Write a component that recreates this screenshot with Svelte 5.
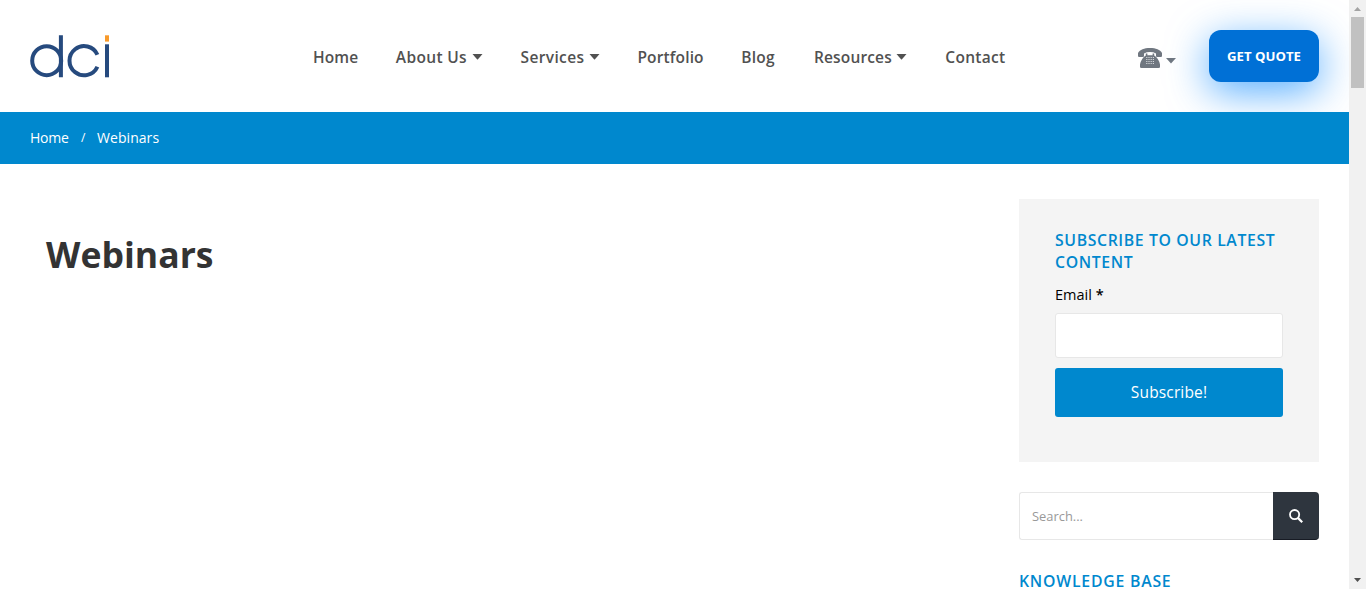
<script>
  const links = [
    { label: 'Home', width: 45, gap: 0.12 },
    { label: 'About Us', width: 87, menu: true, gap: 0.35 },
    { label: 'Services', width: 79, menu: true, gap: 0.35 },
    { label: 'Portfolio', width: 66, gap: 0.15 },
    { label: 'Blog', width: 35, gap: 0.3 },
    { label: 'Resources', width: 93.5, menu: true, gap: 0.15 },
    { label: 'Contact', width: 60, gap: 0.3 }
  ];
</script>

<div class="page">
  <div class="content">
    <header>
      <a class="logo" href="#home" aria-label="dci">
        <svg width="80" height="44" viewBox="0 0 80 44" fill="none" stroke="#264a7e" stroke-width="4">
          <circle cx="16.7" cy="25.700" r="14.500" />
          <path d="M30.900 0.300V42.3M67.400 19.700A14.6 14.6 0 1 0 67.400 31.7" />
          <path d="M77 9.300V42.3" />
          <path d="M77 0.300V6.600" stroke="#f89a2b" />
        </svg>
      </a>
      <nav>
        {#each links as link}
          <a href="#nav" style:width="{link.width}px" style:letter-spacing="{link.gap}px">
            {link.label}
            {#if link.menu}
              <svg class="caret" width="11" height="6" viewBox="0 0 11 6"><path d="M.5 0h10L6 5.200q-.5.5-1 0z" fill="currentColor" /></svg>
            {/if}
          </a>
        {/each}
      </nav>
      <div class="phone">
        <svg width="24" height="21" viewBox="0 0 24 21">
          <path fill="#707780" d="M0 8V5C2 1.500 6 0 12 0s10 1.500 12 5v3q-.1 1-1 1h-4q-1 0-1-1V5.400Q15.500 4 12 4T6 5.400V8q0 1-1 1H1Q.1 9 0 8z" />
          <path fill="#707780" d="M7.800 5.500h1.600v1.700h5.200V5.500h1.600v2q4.400 2.700 5.800 8.900V19q0 1-1.500 1h-17Q2 20 2 19v-2.600q1.400-6.200 5.800-8.900z" />
          <path stroke="#d4d7da" stroke-width="1.200" stroke-dasharray="1.200 1" d="M8.200 9.500h7.800M8.200 11.500h7.800M8.200 13.500h7.800M8.200 15.500h7.800" />
        </svg>
        <svg class="phone-caret" width="10" height="6" viewBox="0 0 10 6"><path d="M0 0h10L5 5.500z" fill="#707780" /></svg>
      </div>
      <a class="quote" href="#quote">GET QUOTE</a>
    </header>

    <div class="crumbs">
      <a href="#home">Home</a><span class="slash">/</span><span class="current">Webinars</span>
    </div>

    <main>
      <h1>Webinars</h1>
      <aside>
        <form class="subscribe">
          <h2>SUBSCRIBE TO OUR LATEST<br />CONTENT</h2>
          <label for="email">Email <b>*</b></label>
          <input id="email" type="email" />
          <button type="button">Subscribe!</button>
        </form>
        <form class="search">
          <input type="text" placeholder="Search..." />
          <button type="button" aria-label="Search">
            <svg width="14" height="14" viewBox="0 0 14 14" fill="none" stroke="#fff"><circle cx="5.600" cy="5.600" r="4.600" stroke-width="1.800" /><path d="M8.900 8.900l4.300 4.300" stroke-width="2.200" /></svg>
          </button>
        </form>
        <h2 class="kb">KNOWLEDGE BASE</h2>
      </aside>
    </main>
  </div>
  <div class="scrollbar">
    <svg width="17" height="17" viewBox="0 0 17 17"><path d="M5 11h7L8.500 7z" fill="#a3a3a3" /></svg>
    <div class="thumb"></div>
    <svg class="down" width="17" height="17" viewBox="0 0 17 17"><path d="M5 6h7l-3.500 4z" fill="#505050" /></svg>
  </div>
</div>

<style>
  :global(body) { margin: 0; overflow: hidden; background: #fff; }
  .page { display: flex; width: 1366px; height: 589px; overflow: hidden; font-family: "Open Sans", sans-serif; }
  .page * { box-sizing: border-box; }
  a { color: inherit; text-decoration: none; }
  .content { width: 1349px; height: 589px; overflow: hidden; }
  header { display: flex; height: 112px; padding: 0 30px; overflow: hidden; }
  .logo { width: 283px; padding-top: 35px; }
  .logo svg, .phone svg { display: block; }
  nav { display: flex; gap: 37.800px; width: 824.500px; padding-top: 46px; font-size: 15.500px; font-weight: 600; line-height: 22px; color: #515151; }
  nav a { display: flex; justify-content: space-between; white-space: nowrap; flex: none; }
  .caret { margin-top: 8px; }
  .phone { display: flex; gap: 4.500px; width: 71.500px; padding-top: 48px; }
  .phone-caret { margin-top: 10px; }
  .quote { width: 110px; height: 52px; margin-top: 30px; flex: none; border-radius: 12px; background: #0070d6; color: #fff; box-shadow: 0 10px 40px #0084ffaa; font-size: 13.200px; font-weight: 700; line-height: 52px; text-align: center; white-space: nowrap; }
  .crumbs { display: flex; height: 52px; padding-left: 30px; background: #0088ce; color: #fff; font-size: 14px; line-height: 52px; }
  .crumbs a { width: 51px; letter-spacing: -0.2px; }
  .slash { width: 16px; font-size: 12px; }
  .current { letter-spacing: 0.06px; }
  main { display: flex; justify-content: space-between; padding: 35px 30px 0 46px; }
  h1 { margin: 31px 0 0; font-size: 35.600px; line-height: 48px; font-weight: 700; color: #333; }
  aside { width: 300px; }
  .subscribe { height: 263px; padding: 30px 36px 0; background: #f4f4f4; }
  h2 { margin: 0; color: #0088ce; font-size: 15.800px; line-height: 22px; font-weight: 600; letter-spacing: 0.62px; white-space: nowrap; }
  label { display: block; height: 30px; margin-top: 1px; padding-top: 10px; font-size: 14.500px; line-height: 22px; color: #000; }
  label b { font-weight: 600; }
  input { display: block; border: 1px solid #e7e7e7; border-radius: 3px; background: #fff; font-family: inherit; outline: 0; }
  button { border: 0; padding: 0; font-family: inherit; color: #fff; }
  .subscribe input { width: 228px; height: 45px; margin-top: 9px; }
  .subscribe button { width: 228px; height: 49px; margin-top: 10px; padding-bottom: 1px; border-radius: 3px; background: #0088ce; font-size: 15.500px; letter-spacing: 0.15px; }
  .search { display: flex; height: 48px; margin-top: 30px; }
  .search input { width: 254px; height: 48px; padding: 0 12px; border-right: 0; border-radius: 3px 0 0 3px; font-size: 12.900px; }
  .search input::placeholder { color: #999; opacity: 1; }
  .search button { display: grid; place-items: center; width: 46px; height: 48px; background: #2e353e; border-bottom: 1px solid #171b24; border-radius: 0 4px 4px 0; }
  .kb { margin-top: 33px; line-height: 16px; letter-spacing: 0.78px; }
  .scrollbar { display: flex; flex-direction: column; align-items: center; width: 17px; height: 589px; background: #f1f1f1; }
  .thumb { width: 13px; height: 71px; background: #c1c1c1; }
  .scrollbar svg { display: block; flex: none; }
  .down { margin-top: auto; }
</style>
